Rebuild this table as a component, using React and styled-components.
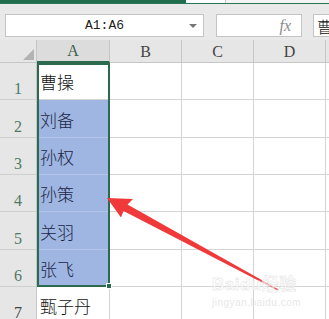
import styled, { createGlobalStyle } from 'styled-components';

const GlobalStyle = createGlobalStyle`
  html, body {
    margin: 0;
    padding: 0;
    background: #ffffff;
    overflow: hidden;
  }
  * { box-sizing: border-box; }
`;

const names = ['曹操', '刘备', '孙权', '孙策', '关羽', '张飞', '甄子丹'];
const columns = ['A', 'B', 'C', 'D', ''];

function App() {
  return (
    <Page>
      <GlobalStyle />
      <TopStrip>
        <GreenTab />
        <PaleTab />
      </TopStrip>
      <GreenLine />
      <FormulaBar>
        <NameBox>
          <span>A1:A6</span>
          <DropArrow />
        </NameBox>
        <FxBox>
          <Fx>fx</Fx>
        </FxBox>
        <ContentBox>曹</ContentBox>
      </FormulaBar>
      <Sheet>
        <Corner>
          <CornerMark />
        </Corner>
        {columns.map((col, c) => (
          <ColHead key={c} col={c + 2} selected={col === 'A'}>
            {col}
          </ColHead>
        ))}
        {names.map((name, i) => (
          <Row key={name} name={name} index={i} />
        ))}
        <Selection>
          <FillHandle />
        </Selection>
      </Sheet>
      <Arrow viewBox="0 0 329 319" width="329" height="319">
        <polygon
          points="107,198 133,199 127.5,204.5 278.5,289.4 277.6,290.6 123.5,211 121,217.5"
          fill="#f0393a"
        />
      </Arrow>
      <Watermark>
        <Mark>Baidu经验</Mark>
        <MarkUrl>jingyan.baidu.com</MarkUrl>
      </Watermark>
    </Page>
  );
}

function Row({ name, index }) {
  const selected = index < 6;
  const row = index + 2;
  return (
    <>
      <RowHead row={row} selected={selected}>
        {index + 1}
      </RowHead>
      <Cell row={row} col={2} fill={selected && index > 0}>
        {name}
      </Cell>
      {[3, 4, 5, 6].map(col => (
        <Cell key={col} row={row} col={col} />
      ))}
    </>
  );
}

export default App;

const Page = styled.div`
  position: relative;
  width: 329px;
  height: 319px;
  overflow: hidden;
  background: #ffffff;
`;

// title strip
const TopStrip = styled.div`
  display: flex;
  height: 3px;
  background: #f4f4f4;
`;
const GreenTab = styled.div`
  width: 186px;
  background: #1f6e4d;
`;
const PaleTab = styled.div`
  width: 40px;
  background: #ffffff;
  border-right: 1px solid #c9c9c9;
`;
const GreenLine = styled.div`
  height: 1px;
  background: #2a7556;
`;

// formula bar
const FormulaBar = styled.div`
  display: flex;
  align-items: flex-start;
  height: 36px;
  padding: 10px 0 0 5px;
  background: #e9e9e9;
`;
const Box = styled.div`
  flex-shrink: 0;
  height: 23px;
  background: #ffffff;
  border: 1px solid #c4c4c4;
  display: flex;
  align-items: center;
`;
const NameBox = styled(Box)`
  position: relative;
  width: 199px;
  justify-content: center;
  font-family: 'Liberation Mono', monospace;
  font-size: 13px;
  color: #222;
`;
const DropArrow = styled.div`
  position: absolute;
  right: 6px;
  top: 9px;
  width: 0;
  height: 0;
  border-left: 4px solid transparent;
  border-right: 4px solid transparent;
  border-top: 4px solid #777;
`;
const FxBox = styled(Box)`
  width: 86px;
  margin-left: 12px;
  justify-content: flex-end;
  padding-right: 10px;
`;
const Fx = styled.span`
  font-family: 'Liberation Serif', serif;
  font-style: italic;
  font-size: 16px;
  color: #8a8a8a;
`;
const ContentBox = styled(Box)`
  width: 40px;
  margin-left: 11px;
  padding-left: 3px;
  font-family: 'Noto Sans CJK SC', sans-serif;
  font-weight: 300;
  font-size: 16px;
  color: #111;
`;

// sheet
const Sheet = styled.div`
  display: grid;
  grid-template-columns: 37px 73px 72px 72px 72px 72px;
  grid-template-rows: 23px repeat(7, 37.33px);
`;
const HeadBase = styled.div`
  background: #e6e6e6;
  font-family: 'Liberation Serif', serif;
  font-size: 16px;
  display: flex;
  justify-content: center;
`;
const Corner = styled(HeadBase)`
  position: relative;
  grid-row: 1;
  grid-column: 1;
  border-bottom: 1px solid #c6c6c6;
  border-right: 1px solid #c6c6c6;
`;
const CornerMark = styled.div`
  position: absolute;
  right: 2px;
  bottom: 2px;
  width: 0;
  height: 0;
  border-left: 11px solid transparent;
  border-bottom: 11px solid #b3b3b3;
`;
const ColHead = styled(HeadBase)`
  grid-row: 1;
  grid-column: ${p => p.col};
  align-items: center;
  color: ${p => (p.selected ? '#3d5f4f' : '#444')};
  background: ${p => (p.selected ? '#dcdcdc' : '#e6e6e6')};
  border-right: 1px solid #c6c6c6;
  border-bottom: ${p => (p.selected ? '2px solid #2b6a4f' : '1px solid #c6c6c6')};
  padding-top: 1px;
`;
const RowHead = styled(HeadBase)`
  grid-row: ${p => p.row};
  grid-column: 1;
  align-items: flex-end;
  padding-bottom: 1px;
  color: ${p => (p.selected ? '#4f7a64' : '#444')};
  border-right: 1px solid #c6c6c6;
  border-bottom: 1px solid #cfcfcf;
`;
const Cell = styled.div`
  grid-row: ${p => p.row};
  grid-column: ${p => p.col};
  display: flex;
  align-items: flex-end;
  padding: 0 0 8px 3px;
  background: ${p => (p.fill ? '#9fb6e2' : '#ffffff')};
  color: ${p => (p.fill ? '#1c2745' : '#111')};
  border-right: 1px solid #d4d4d4;
  border-bottom: 1px solid ${p => (p.fill ? '#b3c5e8' : '#d4d4d4')};
  font-family: 'Noto Sans CJK SC', sans-serif;
  font-weight: 300;
  font-size: 17px;
  line-height: 18px;
  white-space: nowrap;
`;
const Selection = styled.div`
  position: relative;
  grid-column: 2;
  grid-row: 2 / 8;
  border: 2px solid #2b6a4f;
  pointer-events: none;
`;
const FillHandle = styled.div`
  position: absolute;
  right: -4px;
  bottom: -4px;
  width: 6px;
  height: 6px;
  background: #2b6a4f;
  border: 1px solid #ffffff;
`;

// overlays
const Arrow = styled.svg`
  position: absolute;
  left: 0;
  top: 0;
  pointer-events: none;
`;
const Watermark = styled.div`
  position: absolute;
  left: 212px;
  top: 276px;
  display: flex;
  flex-direction: column;
  align-items: flex-start;
  pointer-events: none;
`;
const Mark = styled.div`
  font-family: 'Liberation Sans', 'Noto Sans CJK SC', sans-serif;
  font-weight: bold;
  font-size: 17px;
  line-height: 18px;
  color: rgba(255, 255, 255, 0.6);
  -webkit-text-stroke: 0.5px #e2e2e2;
  letter-spacing: 0.5px;
`;
const MarkUrl = styled.div`
  margin-top: 3px;
  font-family: 'Liberation Sans', sans-serif;
  font-size: 10px;
  color: #e8e8e8;
  letter-spacing: 0.5px;
`;
